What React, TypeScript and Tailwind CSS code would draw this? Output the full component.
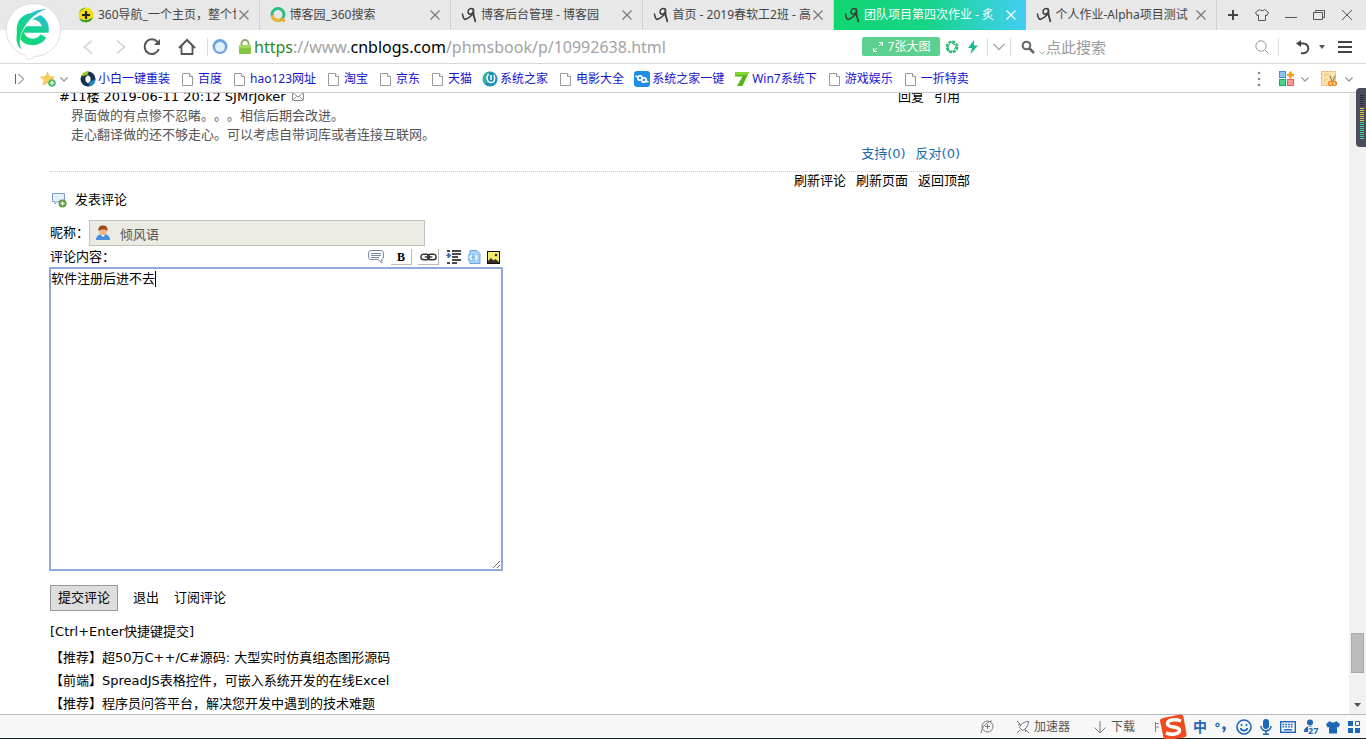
import { useState } from 'react'
import type { ReactNode } from 'react'

interface Tab {
  title: string
  icon: ReactNode
  active?: boolean
}

interface Bookmark {
  name: string
  icon?: ReactNode
}

function BlogIcon() {
  return (
    <svg viewBox="0 0 16 16" className="w-4 h-4 shrink-0" fill="none" stroke="#3c3c3c" strokeLinecap="round">
      <path d="M1.500 7c.5 3.500 1.500 5.800 3.200 5.300C7 11.600 9.500 9.500 11.500 7.500" strokeWidth="1.500" />
      <path d="M12.300 2.500C10 .5 6.800 2 7 5c.2 2.800 3.500 2.800 5 .3" strokeWidth="1.500" />
      <path d="M12.300 2.300c-.3 4 .5 8 2 12" strokeWidth="1.800" />
    </svg>
  )
}

function PageIcon() {
  return (
    <svg viewBox="0 0 16 16" className="w-4 h-4 shrink-0" fill="#fff" stroke="#9a9a9a">
      <path d="M2.500 2.500h7l3 3v9h-10z" />
      <path d="M9.500 2.500v3h3" />
    </svg>
  )
}

function NavIcon() {
  return (
    <svg viewBox="0 0 16 16" className="w-4 h-4 shrink-0">
      <circle cx="8" cy="8" r="7.500" fill="#f4dc12" />
      <path d="M1 11a7.500 7.500 0 0 0 14-1C11 14 4 14 1 11z" fill="#2f9c3c" />
      <path d="M1 6a7.500 7.500 0 0 1 7-5.500C5 2 3 3.500 1 6z" fill="#5cb531" />
      <path d="M8 4v8M4 8h8" stroke="#222" strokeWidth="2.200" />
    </svg>
  )
}

function SearchRingIcon() {
  return (
    <svg viewBox="0 0 16 16" className="w-4 h-4 shrink-0" fill="none" strokeWidth="3">
      <circle cx="8" cy="7.500" r="6" stroke="#2dbd7e" />
      <path d="M2 8a6 6 0 0 0 9 4.500" stroke="#f6b32c" />
      <path d="M11.500 11.500l3 3" stroke="#f6a12c" />
    </svg>
  )
}

function SmallChevron() {
  return (
    <svg viewBox="0 0 8 8" className="w-2 h-2 shrink-0" fill="none" stroke="#999" strokeWidth="1.300">
      <path d="M.5 2.500L4 6l3.500-3.500" />
    </svg>
  )
}

function BrowserLogo() {
  return (
    <svg viewBox="0 0 56 61" className="w-14 h-[61px]">
      <defs>
        <linearGradient id="logo" gradientUnits="userSpaceOnUse" x1="14" y1="46" x2="40" y2="10">
          <stop offset="0" stopColor="#0edb6e" />
          <stop offset="0.600" stopColor="#17cf9b" />
          <stop offset="1" stopColor="#35b8ec" />
        </linearGradient>
      </defs>
      <path d="M28 3.500a26.500 26.500 0 0 1 2 53L23 60l-4-5A26.500 26.500 0 0 1 28 3.500z" fill="#fff" stroke="#dedede" />
      <path d="M14 29.500H40.500A12.800 12.800 0 1 0 38.500 36" fill="none" stroke="url(#logo)" strokeWidth="6.500" />
      <path d="M40 12C26 16 13 28 13 47" fill="none" stroke="#fff" strokeWidth="2.500" />
      <path d="M41 9.500C30 8 18 17 13.500 28 10 37 11 45 16.500 49.500 13 42 15 34 20 26 25 18 32 12 41 9.500z" fill="url(#logo)" />
    </svg>
  )
}

const tabs: Tab[] = [
  { title: '360导航_一个主页，整个世', icon: <NavIcon /> },
  { title: '博客园_360搜索', icon: <SearchRingIcon /> },
  { title: '博客后台管理 - 博客园', icon: <BlogIcon /> },
  { title: '首页 - 2019春软工2班 - 高', icon: <BlogIcon /> },
  { title: '团队项目第四次作业 - 炙', icon: <BlogIcon />, active: true },
  { title: '个人作业-Alpha项目测试', icon: <BlogIcon /> },
]

const bookmarks: Bookmark[] = [
  {
    name: '小白一键重装',
    icon: (
      <svg viewBox="0 0 16 16" className="w-4 h-4 shrink-0">
        <circle cx="8" cy="8" r="7.500" fill="#16324a" />
        <path d="M9 .5a7.500 7.500 0 0 0-8 5L7 4z" fill="#9ccc2e" />
        <path d="M15.500 8a7.500 7.500 0 0 1-7 7.500L10 11z" fill="#2288cc" />
        <path d="M8 4l2.500 2.500V10L8 12.500 5.500 10V6.500z" fill="#fff" />
      </svg>
    ),
  },
  { name: '百度' },
  { name: 'hao123网址' },
  { name: '淘宝' },
  { name: '京东' },
  { name: '天猫' },
  {
    name: '系统之家',
    icon: (
      <svg viewBox="0 0 16 16" className="w-4 h-4 shrink-0">
        <circle cx="8" cy="8" r="7.500" fill="#1d8fc0" />
        <path d="M1 6a7.500 7.500 0 0 1 7-5.500L5 5 4 13.500A7.500 7.500 0 0 1 1 6z" fill="#35b88d" />
        <path d="M6.500 3c-3 4-1 8.500 2.500 8.500s4.500-3 3-7.500" fill="none" stroke="#fff" strokeWidth="1.500" />
        <path d="M9 4v5" stroke="#fff" strokeWidth="1.500" />
      </svg>
    ),
  },
  { name: '电影大全' },
  {
    name: '系统之家一键',
    icon: (
      <svg viewBox="0 0 16 16" className="w-4 h-4 shrink-0">
        <rect width="16" height="16" rx="3" fill="#1f8de6" />
        <circle cx="6" cy="7" r="2.200" fill="none" stroke="#fff" strokeWidth="1.800" />
        <circle cx="10" cy="9" r="2.200" fill="none" stroke="#fff" strokeWidth="1.800" />
        <path d="M1.500 5l3 1M11.500 10l3 1" stroke="#fff" strokeWidth="1.500" />
      </svg>
    ),
  },
  {
    name: 'Win7系统下',
    icon: (
      <svg viewBox="0 0 16 16" className="w-4 h-4 shrink-0">
        <path d="M1 1h14L8.500 15H3L8.500 5.500H1z" fill="#55b514" />
        <path d="M1 1h14l-2 3H1z" fill="#86d432" />
      </svg>
    ),
  },
  { name: '游戏娱乐' },
  { name: '一折特卖' },
]

const ads = [
  '【推荐】超50万C++/C#源码: 大型实时仿真组态图形源码',
  '【前端】SpreadJS表格控件，可嵌入系统开发的在线Excel',
  '【推荐】程序员问答平台，解决您开发中遇到的技术难题',
]

function TabBar() {
  return (
    <div className="h-[30px] bg-[#e8e8e8] flex pl-[68px] text-xs text-[#444]">
      <div className="flex-1 grid grid-cols-6 min-w-0">
        {tabs.map((tab) => (
          <div
            key={tab.title}
            className={
              tab.active
                ? 'flex items-center min-w-0 px-[10px] text-white bg-linear-to-r from-[#10d66e] via-[#16d489] to-[#42cdf4]'
                : 'flex items-center min-w-0 px-[10px] border-r border-[#d0d0d0]'
            }
          >
            {tab.icon}
            <span className="flex-1 min-w-0 ml-1 mr-[3px] overflow-hidden whitespace-nowrap">{tab.title}</span>
            <button aria-label="关闭标签页">
              <svg
                viewBox="0 0 10 10"
                className={tab.active ? 'w-[10px] h-[10px] stroke-white' : 'w-[10px] h-[10px] stroke-[#777]'}
                strokeWidth="1.200"
              >
                <path d="M.5.5l9 9M9.500.5l-9 9" />
              </svg>
            </button>
          </div>
        ))}
      </div>
      <div className="w-[149px] flex items-center justify-between pl-[9px] pr-[13px]">
        <button aria-label="新标签页">
          <svg viewBox="0 0 14 14" className="w-[14px] h-[14px]" stroke="#444" strokeWidth="2">
            <path d="M7 2v10M2 7h10" />
          </svg>
        </button>
        <button aria-label="皮肤">
          <svg viewBox="0 0 14 14" className="w-[14px] h-[14px]" fill="none" stroke="#555">
            <path d="M4.500 1.500L.5 4.500l1.500 3 1.500-.5v5.500h7V7l1.500.5 1.500-3-4-3c-1 1.500-4 1.500-5 0z" />
          </svg>
        </button>
        <button aria-label="最小化">
          <svg viewBox="0 0 14 14" className="w-[14px] h-[14px]" stroke="#555">
            <path d="M1 9.500h12" />
          </svg>
        </button>
        <button aria-label="还原">
          <svg viewBox="0 0 14 14" className="w-[14px] h-[14px]" fill="none" stroke="#555">
            <path d="M1.500 4.500h9v7h-9zM3.500 4.500v-2h9v7h-2" />
          </svg>
        </button>
        <button aria-label="关闭">
          <svg viewBox="0 0 12 12" className="w-3 h-3" stroke="#555">
            <path d="M1 1l10 10M11 1L1 11" />
          </svg>
        </button>
      </div>
    </div>
  )
}

function AddressBar() {
  return (
    <div className="h-[34px] border-b border-[#d9d9d9] flex items-center pl-[78px]">
      <div className="flex items-center gap-[14px]">
        <button aria-label="后退">
          <svg viewBox="0 0 20 20" className="w-5 h-5" fill="none" stroke="#cfcfcf" strokeWidth="1.500">
            <path d="M14 3.500L6.500 10l7.500 6.500" />
          </svg>
        </button>
        <button aria-label="前进">
          <svg viewBox="0 0 20 20" className="w-5 h-5" fill="none" stroke="#cfcfcf" strokeWidth="1.500">
            <path d="M5 3.500l7.500 6.500L5 16.500" />
          </svg>
        </button>
        <button aria-label="刷新" className="-ml-1">
          <svg viewBox="0 0 20 20" className="w-5 h-5" fill="none" stroke="#555" strokeWidth="2">
            <path d="M16.800 12A7.300 7.300 0 1 1 15.500 5" />
            <path d="M18 2v6h-6z" fill="#555" stroke="none" />
          </svg>
        </button>
        <button aria-label="主页">
          <svg viewBox="0 0 20 20" className="w-5 h-5" fill="none" stroke="#555" strokeWidth="2">
            <path d="M3 11l8-8 8 8" />
            <path d="M5.500 9v8h11V9" strokeWidth="1.800" />
          </svg>
        </button>
      </div>
      <div className="ml-[11px] h-[18px] border-l border-[#ddd]" />
      <svg viewBox="0 0 18 18" className="ml-[3px] w-[18px] h-[18px] shrink-0">
        <circle cx="9" cy="8.500" r="7.500" fill="#6fa3dc" />
        <circle cx="9" cy="9" r="5" fill="#dff1ff" />
      </svg>
      <svg viewBox="0 0 14 16" className="ml-[9px] w-[14px] h-4 shrink-0">
        <path d="M3.500 7V4.500a3.500 3.500 0 0 1 7 0V7" fill="none" stroke="#8aa85c" strokeWidth="1.800" />
        <rect x="1" y="6" width="12" height="9" rx="1" fill="#87c440" />
        <rect x="1" y="6" width="12" height="3" rx="1" fill="#a5d765" />
      </svg>
      <div role="textbox" aria-label="地址" className="flex-1 min-w-0 ml-[2px] text-base whitespace-nowrap overflow-hidden text-[#a3a3a3]">
        <span className="text-[#2a8a2a]">https</span>://www.<span className="text-black">cnblogs.com</span>
        /phmsbook/p/10992638.html
      </div>
      <button className="w-[78px] h-[19px] rounded-xs bg-[#5bd08f] text-white text-xs flex items-center justify-center gap-1">
        <svg viewBox="0 0 12 12" className="w-3 h-3" fill="none" stroke="#fff">
          <path d="M7 5l3.500-3.500M7 1.500h3.500V5M5 7l-3.500 3.500M1.500 7v3.500H5" />
        </svg>
        7张大图
      </button>
      <svg viewBox="0 0 14 14" className="ml-[5px] w-[14px] h-[14px]" fill="none" stroke="#2fb777">
        <circle cx="7" cy="7" r="5.300" strokeWidth="2.200" strokeDasharray="3 1.100" />
        <path d="M6 2l4 3M11.500 5l-2 4.500M10 11H5M4.500 12L3 7.500M2 8l3-4" strokeWidth="1.200" />
      </svg>
      <svg viewBox="0 0 12 14" className="ml-2 w-3 h-[14px]">
        <path d="M7 0L1 8h4l-1.500 6L11 5.500H7z" fill="#17b98d" />
      </svg>
      <div className="ml-2 w-6 h-[18px] border-l border-r border-[#ddd] flex items-center justify-center">
        <svg viewBox="0 0 12 8" className="w-3 h-2" fill="none" stroke="#aaa" strokeWidth="1.300">
          <path d="M.5 1L6 6.500 11.500 1" />
        </svg>
      </div>
      <div className="w-[267px] flex items-center pl-[10px] pr-[9px]">
        <svg viewBox="0 0 14 14" className="w-[14px] h-[14px]" fill="none" stroke="#666">
          <circle cx="5.500" cy="5.500" r="3.800" strokeWidth="2" />
          <path d="M8.500 8.500l4.500 4.500" strokeWidth="2.600" />
        </svg>
        <svg viewBox="0 0 6 4" className="w-[6px] h-1 mt-3 ml-1" fill="none" stroke="#aaa">
          <path d="M.5.5L3 3 5.500.5" />
        </svg>
        <input
          aria-label="搜索"
          placeholder="点此搜索"
          className="flex-1 min-w-0 ml-px h-6 text-[15px] placeholder:text-[#999] outline-none"
        />
        <svg viewBox="0 0 14 14" className="w-[14px] h-[14px]" fill="none" stroke="#999">
          <circle cx="6" cy="6" r="5.200" />
          <path d="M10 10l3.500 3.500" />
        </svg>
      </div>
      <div className="w-[88px] h-[18px] border-l border-[#ddd] flex items-center pl-4">
        <svg viewBox="0 0 16 16" className="w-4 h-4" fill="none" stroke="#444" strokeWidth="2">
          <path d="M3 4.500h5.500a4.800 4.800 0 0 1 0 9.700H6" />
          <path d="M6 1v7L1 4.500z" fill="#444" stroke="none" />
        </svg>
        <svg viewBox="0 0 6 4" className="ml-2 w-[6px] h-1">
          <path d="M0 0h6L3 4z" fill="#555" />
        </svg>
        <button aria-label="菜单" className="ml-[13px]">
          <svg viewBox="0 0 14 14" className="w-[14px] h-[14px]" stroke="#444" strokeWidth="2">
            <path d="M0 2h14M0 7h14M0 12h14" />
          </svg>
        </button>
      </div>
    </div>
  )
}

function BookmarkBar() {
  return (
    <div className="h-[29px] border-b border-[#c9c9c9] flex items-center pt-px pl-[13px] pr-[13px] text-xs">
      <svg viewBox="0 0 12 12" className="w-3 h-3" fill="none" stroke="#666">
        <path d="M2.500 1v10M5.500 1l5 5-5 5" />
      </svg>
      <svg viewBox="0 0 16 16" className="ml-[15px] w-4 h-4">
        <path d="M7.500 1l2 4.500 5 .5-3.700 3.300 1 5-4.300-2.500-4.500 2.500 1-5L.5 6l5-.5z" fill="#f8cf5a" stroke="#e0b04a" strokeWidth="0.500" />
        <circle cx="12" cy="12" r="3.800" fill="#52b96c" />
        <path d="M12 10v4M10 12h4" stroke="#fff" strokeWidth="1.200" />
      </svg>
      <span className="ml-1">
        <SmallChevron />
      </span>
      <nav className="flex-1 ml-3 flex gap-[10px] min-w-0 overflow-hidden">
        {bookmarks.map((b) => (
          <a key={b.name} href="#" className="flex items-center gap-[2px] whitespace-nowrap text-[#1414d2]">
            {b.icon ?? <PageIcon />}
            {b.name}
          </a>
        ))}
      </nav>
      <svg viewBox="0 0 4 16" className="w-1 h-4" fill="#888">
        <circle cx="2" cy="2" r="1.300" />
        <circle cx="2" cy="8" r="1.300" />
        <circle cx="2" cy="14" r="1.300" />
      </svg>
      <svg viewBox="0 0 16 16" className="ml-[18px] w-4 h-4">
        <rect x="0.500" y="0.500" width="6" height="6" fill="#8cc4f5" stroke="#3d8fdc" />
        <rect x="0.500" y="8.500" width="6" height="6" fill="#4bd08a" stroke="#1fa862" />
        <rect x="8.500" y="8.500" width="6" height="6" fill="#f59a94" stroke="#e0625a" />
        <path d="M11.500.5v7M8 4h7" stroke="#f0a010" strokeWidth="2.500" />
      </svg>
      <span className="ml-[6px]">
        <SmallChevron />
      </span>
      <svg viewBox="0 0 16 16" className="ml-3 w-4 h-4">
        <rect x="0.500" y="0.500" width="14" height="14" fill="#fbe2ae" stroke="#e9b65f" strokeDasharray="3 1" />
        <path d="M3 5l3-2 3 2M3 10l3-2" stroke="#f0bd63" fill="none" />
        <path d="M9 5l2 5M14 5l-2 5" stroke="#7a6a50" />
        <circle cx="9.500" cy="12.500" r="2" fill="none" stroke="#ec8c1c" strokeWidth="1.400" />
        <circle cx="13.500" cy="12.500" r="2" fill="none" stroke="#ec8c1c" strokeWidth="1.400" />
      </svg>
      <span className="ml-2">
        <SmallChevron />
      </span>
    </div>
  )
}

function EditorToolbar() {
  return (
    <div className="flex items-center pt-px">
      <button aria-label="引用">
        <svg viewBox="0 0 18 16" className="w-[18px] h-4" fill="#fff" stroke="#7d8ba6">
          <path d="M4 1.500h10a2.500 2.500 0 0 1 2.500 2.500v4a2.500 2.500 0 0 1-2 2.500L15 14l-4-3.500H4A2.500 2.500 0 0 1 1.500 8V4A2.500 2.500 0 0 1 4 1.500z" />
          <path d="M4 4.500h10M4 6.500h10M4 8.500h8" />
        </svg>
      </button>
      <button
        aria-label="粗体"
        className="ml-[6px] w-[21px] h-4 border-r border-b border-[#bbb] flex items-center justify-center font-['Liberation_Serif',serif] font-black text-xs leading-none"
      >
        B
      </button>
      <button aria-label="链接" className="ml-[6px] w-[21px] h-4 border-r border-b border-[#bbb] flex items-center justify-center">
        <svg viewBox="0 0 18 10" className="w-[17px] h-[10px]" fill="none" stroke="#333" strokeWidth="1.500">
          <rect x="1" y="2" width="9" height="6" rx="3" />
          <rect x="8" y="2" width="9" height="6" rx="3" />
          <path d="M5 5h8" />
        </svg>
      </button>
      <button aria-label="缩进" className="ml-[6px]">
        <svg viewBox="0 0 16 14" className="w-4 h-[14px]" stroke="#111" strokeWidth="1.500">
          <path d="M2 1h3M7 1h9M7 4h9M7 7h6M7 10h9M2 13h3M7 13h5" />
          <path d="M1 5.500h4M3 3l3 2.500L3 8z" stroke="#3a6ab8" fill="#3a6ab8" strokeWidth="1" />
        </svg>
      </button>
      <button aria-label="代码" className="ml-[6px]">
        <svg viewBox="0 0 14 14" className="w-[14px] h-[14px]">
          <path d="M3 .5h7l3 3v10H3z" fill="#a8d2f5" stroke="#6aa7dd" />
          <path d="M1 4h7v7H1z" fill="#8cc0ee" />
          <path d="M5 5L3 7.500 5 10M8 5l2 2.500L8 10" fill="none" stroke="#fff" strokeWidth="1.300" />
        </svg>
      </button>
      <button aria-label="图片" className="ml-[6px]">
        <svg viewBox="0 0 13 13" className="w-[13px] h-[13px]">
          <rect x="0.500" y="0.500" width="12" height="12" fill="#f5ec6e" stroke="#111" />
          <path d="M1 12v-2l3-3 2.500 2.500L8.500 8l3.500 3v1z" fill="#333" />
          <circle cx="9" cy="4" r="1.300" fill="#333" />
        </svg>
      </button>
    </div>
  )
}

function CommentForm() {
  const [comment, setComment] = useState('软件注册后进不去')

  return (
    <form onSubmit={(e) => e.preventDefault()}>
      <h2 className="h-5 pl-px flex items-center gap-2">
        <svg viewBox="0 0 16 16" className="w-4 h-4">
          <path d="M1.500 1.500h12v8h-7L4 12V9.500H1.500z" fill="#e3effc" stroke="#7d9ccb" />
          <circle cx="11.500" cy="11.500" r="4" fill="#5f9a3c" />
          <path d="M11.500 9.500v4M9.500 11.500h4" stroke="#fff" strokeWidth="1.300" />
        </svg>
        发表评论
      </h2>
      <div className="mt-[10px] flex items-center">
        <label htmlFor="nickname" className="w-[39px]">
          昵称：
        </label>
        <div className="relative">
          <input
            id="nickname"
            readOnly
            value="倾风语"
            className="block w-[336px] h-[26px] pl-[30px] bg-[#ebebe4] border border-[#c3c3bb] text-[#545454] outline-none"
          />
          <svg viewBox="0 0 14 16" className="absolute left-[7px] top-[5px] w-[14px] h-4">
            <path d="M0 15c0-4 3-6 7-6s7 2 7 6z" fill="#4a8ee0" />
            <circle cx="7" cy="6" r="4" fill="#f2b98c" />
            <path d="M2.500 6C2 2 4 .5 7 .5S12 2 11.500 6C10 4 5 4 2.500 6z" fill="#a1481c" />
            <path d="M5 10l2 2 2-2z" fill="#fff" />
          </svg>
        </div>
      </div>
      <div className="h-[21px] w-[450px] flex items-center justify-between">
        <label htmlFor="comment" className="leading-4">
          评论内容：
        </label>
        <EditorToolbar />
      </div>
      <div className="relative -ml-px">
        <textarea
          id="comment"
          value={comment}
          onChange={(e) => setComment(e.target.value)}
          className="block w-[454px] h-[304px] border-2 border-[#8faadc] text-black outline-none resize"
        />
        <span className="absolute left-[106px] top-1 h-4 border-l border-black" />
      </div>
      <div className="mt-[14px] flex items-center">
        <button type="submit" className="w-[68px] h-[26px] bg-[#ddd] border border-[#999]">
          提交评论
        </button>
        <a href="#" className="ml-[15px]">退出</a>
        <a href="#" className="ml-[15px]">订阅评论</a>
      </div>
      <p className="mt-[11px] h-5">[Ctrl+Enter快捷键提交]</p>
    </form>
  )
}

function StatusBar() {
  return (
    <footer className="h-[25px] shrink-0 bg-[#f7f7f7] border-t border-[#bbb] border-b border-b-[#13242c] flex items-center justify-end pr-[5px] text-xs text-[#555]">
      <svg viewBox="0 0 14 14" className="w-[14px] h-[14px]" fill="none" stroke="#777">
        <circle cx="7.500" cy="6.500" r="5.500" />
        <path d="M7.500 4v5M5 6.500h5M1 13C2 7 6 2 12 1" />
      </svg>
      <a href="#" className="ml-[22px] flex items-center gap-1">
        <svg viewBox="0 0 14 14" className="w-[14px] h-[14px]" fill="none" stroke="#777">
          <path d="M5 9L3.500 7.500C5 4 8 1.500 12.500 1.500c0 4.500-2.500 7.500-6 9zM5 5L2 4.500M9 9l.5 3M4 10l-3 3M1 1l3 3M10 10l3 3" />
        </svg>
        加速器
      </a>
      <a href="#" className="ml-[23px] flex items-center gap-1">
        <svg viewBox="0 0 14 14" className="w-[14px] h-[14px]" fill="none" stroke="#777">
          <path d="M7 1v12M1.500 7.500L7 13l5.500-5.500" />
        </svg>
        下载
      </a>
      <svg viewBox="0 0 4 10" className="ml-[20px] w-1 h-[10px]" fill="none" stroke="#888">
        <path d="M.5 0v10M.5 1.500h3.500M.5 5h3.500" />
      </svg>
      <div className="flex items-center text-[#1e66b8]">
        <svg viewBox="0 0 28 26" className="w-7 h-[26px]">
          <path d="M4 4l17-3.500q3-.5 3.500 2.500l3 17q.5 3-2.500 3.500L8 26q-3 .5-3.500-2.500L1 7q0-2.500 3-3z" fill="#ee4c20" />
          <path d="M22 7C16 4.500 8.500 6 8.500 9.800c0 4.500 12 2 12 6.500 0 4-8 5-13.500 2.500" fill="none" stroke="#fff" strokeWidth="3.500" />
        </svg>
        <span className="ml-[6px] text-sm font-bold">中</span>
        <svg viewBox="0 0 12 12" className="ml-2 w-3 h-3" fill="none" stroke="currentColor">
          <circle cx="2.500" cy="4" r="1.600" strokeWidth="1.300" />
          <circle cx="9" cy="7" r="1.800" fill="currentColor" stroke="none" />
          <path d="M10 7c.3 2-.5 3-2 4" strokeWidth="1.500" />
        </svg>
        <svg viewBox="0 0 16 16" className="ml-[9px] w-4 h-4" fill="none" stroke="currentColor" strokeWidth="1.600">
          <circle cx="8" cy="8" r="7" />
          <path d="M4.500 9c1 3.500 6 3.500 7 0M5.500 5v2M10.500 5v2" />
        </svg>
        <svg viewBox="0 0 14 16" className="ml-[7px] w-[14px] h-4">
          <rect x="4" y="0" width="6" height="10" rx="3" fill="currentColor" />
          <path d="M2 7c0 6.500 10 6.500 10 0M7 12v3M4 15.200h6" fill="none" stroke="currentColor" strokeWidth="1.600" />
        </svg>
        <svg viewBox="0 0 16 12" className="ml-[7px] w-4 h-3">
          <rect x="0.700" y="0.700" width="14.600" height="10.600" fill="none" stroke="currentColor" strokeWidth="1.400" />
          <path d="M2.500 3.500h11M2.500 5.800h11" stroke="currentColor" strokeWidth="1.300" strokeDasharray="1.800 1" />
          <path d="M4 8.800h8" stroke="currentColor" strokeWidth="1.400" />
        </svg>
        <span className="relative ml-2 w-4 h-4">
          <svg viewBox="0 0 16 16" className="w-4 h-4" fill="currentColor">
            <circle cx="6" cy="3.500" r="3" />
            <path d="M0 13c0-4 2-5.500 6-5.500s6 1.500 6 5.500z" />
          </svg>
          <span className="absolute left-1 top-2 bg-[#f7f7f7] text-[9px] leading-2 font-bold">27</span>
        </span>
        <svg viewBox="0 0 14 14" className="ml-[6px] w-[14px] h-[14px]" fill="currentColor">
          <path d="M4 1L0 4l1.500 3.500L3 7v6.500h8V7l1.500.5L14 4l-4-3C9 3 5 3 4 1z" />
        </svg>
        <svg viewBox="0 0 14 14" className="ml-[7px] w-[14px] h-[14px]" fill="currentColor">
          <path d="M1 1h5v5H1zM1 8h5v5H1zM8 8h5v5H8z" />
          <path d="M8.500 1.500h4v4h-4z" fill="none" stroke="currentColor" />
        </svg>
      </div>
    </footer>
  )
}

export default function App() {
  return (
    <div className="relative h-screen flex flex-col overflow-hidden bg-white [text-spacing-trim:space-all] font-['Noto_Sans','Noto_Sans_CJK_SC',sans-serif]">
      <header className="shrink-0">
        <TabBar />
        <AddressBar />
        <BookmarkBar />
      </header>
      <div className="absolute left-[5px] top-0">
        <BrowserLogo />
      </div>

      <div className="flex-1 min-h-0 flex">
        <main className="flex-1 min-w-0 overflow-hidden pl-[50px] text-[13px] leading-5 text-black font-['DejaVu_Sans','Noto_Sans_CJK_SC',sans-serif]">
          <div className="max-w-[920px] -mt-[5px]">
            <div className="pb-2 border-b border-dotted border-[#ccc]">
              <div className="h-[18px] flex items-center justify-between pl-[9px] pr-[10px]">
                <div className="flex items-center gap-[6px]">
                  <span>#11楼 2019-06-11 20:12 SJMrJoker</span>
                  <svg viewBox="0 0 12 10" className="w-3 h-[10px]" fill="none" stroke="#888">
                    <rect x="0.500" y="0.500" width="11" height="8" rx="1" />
                    <path d="M1 1l5 4 5-4M1 8l3.500-3.500M11 8L7.500 4.500" />
                  </svg>
                </div>
                <div className="flex gap-[10px]">
                  <a href="#">回复</a>
                  <a href="#">引用</a>
                </div>
              </div>
              <p className="pl-[21px] leading-[19px] text-[#555]">
                界面做的有点惨不忍睹。。。相信后期会改进。
                <br />
                走心翻译做的还不够走心。可以考虑自带词库或者连接互联网。
              </p>
              <div className="h-[19px] flex items-center justify-end gap-[10px] pr-[10px] text-[#1a6bb0]">
                <a href="#">支持(0)</a>
                <a href="#">反对(0)</a>
              </div>
            </div>
            <div className="h-[18px] flex items-center justify-end gap-[10px]">
              <a href="#">刷新评论</a>
              <a href="#">刷新页面</a>
              <a href="#">返回顶部</a>
            </div>
            <CommentForm />
            <ul className="mt-1">
              {ads.map((ad) => (
                <li key={ad} className="leading-[23px]">
                  <a href="#">{ad}</a>
                </li>
              ))}
            </ul>
          </div>
        </main>
        <div className="w-[17px] bg-[#f1f1f1] flex flex-col items-center justify-end pb-[7px]">
          <div className="w-[13px] h-10 bg-[#bcbcbc] border border-[#a9a9a9]" />
          <svg viewBox="0 0 7 4" className="mt-[30px] w-[7px] h-1">
            <path d="M0 0h7L3.500 4z" fill="#505050" />
          </svg>
        </div>
      </div>

      {/* meter docked on the right edge */}
      <div className="absolute right-0 top-[88px] w-[10px] h-[59px] rounded-l-[4px] bg-[#4b4d5c] pl-1 pt-[7px]">
        <svg viewBox="0 0 4 46" className="w-1 h-[46px]" strokeWidth="4">
          <path d="M2 0v12" stroke="#2c2e3a" strokeDasharray="1 1" />
          <path d="M2 13v14" stroke="#d8c84a" strokeDasharray="1 1" />
          <path d="M2 27v18" stroke="#3fd09a" strokeDasharray="1 1" />
        </svg>
      </div>

      <StatusBar />
    </div>
  )
}
